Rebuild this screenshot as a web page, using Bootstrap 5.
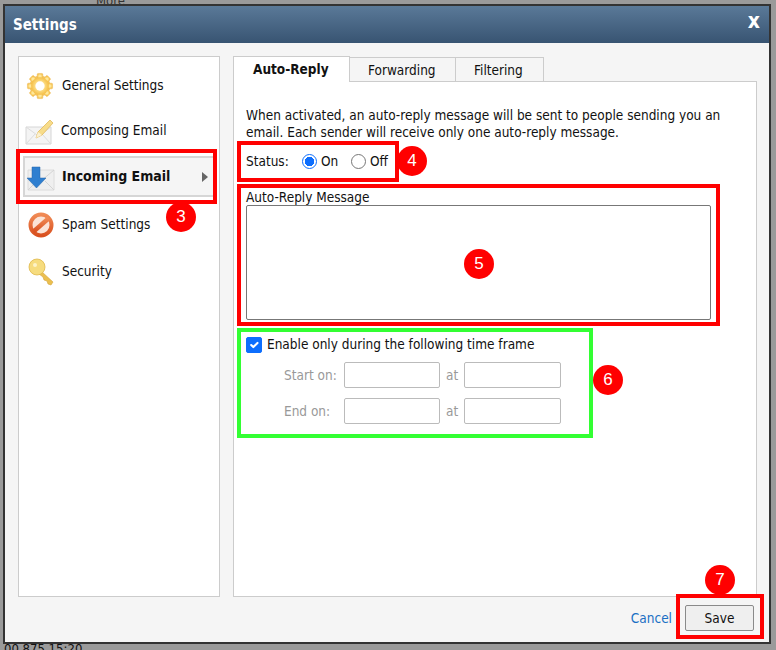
<!DOCTYPE html>
<html lang="en">
<head>
<meta charset="utf-8">
<title>Settings</title>
<link href="https://cdn.jsdelivr.net/npm/bootstrap@5.3.0/dist/css/bootstrap.min.css" rel="stylesheet">
<style>
html,body{height:650px;overflow:hidden}
body{background:#9a9a9a;font-family:"DejaVu Sans Condensed","DejaVu Sans",sans-serif;font-size:13.5px;color:#111;position:relative;padding:4px 0 0 3px}
.dlg{width:768px;height:640px;border:2px solid #333;background:#f5f5f5;display:flex;flex-direction:column}
.dlg-head{height:37px;flex:none;background:linear-gradient(#5a7998,#385472);color:#fff;font-weight:700;font-size:15px;padding:2px 9px 0 8px}
.dlg-x{font-size:21px;line-height:1;font-weight:700;margin-top:-9px}
.dlg-main{flex:1;min-height:0;padding:13px 12px 0 13px;gap:13px}
.side{width:202px;background:#fff;border:1px solid #ccc;padding:8px 4px 4px}
.side-item{height:41px;padding:0 0 0 1px;gap:6px;background:transparent;color:#111;margin-bottom:6px}
.side-item.first{margin-bottom:4px}
.side-item.second{margin-bottom:5px;gap:5px}
.side-item.act{border:2px solid #d6d6d6;background:#f5f5f5;font-weight:700;font-size:14px;margin-bottom:7px;padding-left:0;gap:5px;width:192px}
.side-ico{width:32px;height:32px;flex:none}
.side-arrow{margin-left:auto;margin-right:5px;width:0;height:0;border-left:6px solid #666;border-top:5px solid transparent;border-bottom:5px solid transparent}
.rcol{flex:1;min-width:0}
.tabs{border-bottom:1px solid #ccc;height:26px;flex:none;flex-wrap:nowrap}
.tabs .nav-link{height:25px;margin-top:1px;padding:0 18px;line-height:25px;color:#111;background:#f5f5f5;border:1px solid #ccc;border-radius:0;margin-left:-1px;font-size:13.5px}
.tabs .nav-link.active{background:#fff;font-weight:700;height:27px;margin-top:0;margin-left:0;border-bottom-color:#fff;color:#111;padding:0 19px;width:117px}
.tabs .tab-two{width:107px}
.tabs .tab-three{width:89px}
.pane{flex:1;min-height:0;background:#fff;border:1px solid #ccc;border-top:0;padding:25px 12px 0 12px;line-height:17px}
.stat{height:30px;margin-top:5px}
.stat .form-check-input{width:15px;height:15px;margin:0 4px 0 0;float:none;border:1px solid #777}
.stat .form-check-input:checked{border:1px solid #0d6efd;background:radial-gradient(circle,#0d6efd 0 4.500px,#fff 5px)}
.st-lab{width:56px}
.st-on{width:30px}
.msg-label{line-height:16px;margin-top:13px}
.msg{height:115px;width:465px;border:1px solid #777;border-radius:2px;resize:none;padding:2px;display:block;background:#fff}
.frame{margin-top:16px;line-height:17px}
.frame .form-check-input{width:16px;height:16px;margin:0 5px 0 0;float:none;border-radius:2px}
.tf-row{display:flex;align-items:center;height:26px;color:#999;margin-top:9px}
.tf-row + .tf-row{margin-top:10px}
.tf-lab{width:98px;padding-left:38px}
.tf-in{width:96px;height:26px;border:1px solid #bbb;border-radius:2px;padding:0;background:#fff}
.tf-in.two{width:97px}
.tf-at{width:24px;padding-left:6px}
.foot{height:45px;flex:none;padding:8px 15px 0 0;gap:13px}
.foot a{color:#1a6fc4;text-decoration:none;margin-top:3px}
.savebtn{width:69px;height:26px;padding:0;font-size:13.5px;background:#efefef;border:1px solid #8a8a8a;border-radius:2px;color:#111}
.boxmark{position:absolute;border:4px solid #f00}
.boxmark.grn{border-color:#33ff33}
.num{position:absolute;width:30px;height:30px;border-radius:50%;background:#f00;color:#fff;font-family:"Liberation Sans",sans-serif;font-size:17px;line-height:30px;text-align:center}
.m1{left:16px;top:149px;width:201px;height:55px}
.m2{left:237px;top:141px;width:162px;height:41px}
.m3{left:237px;top:184px;width:483px;height:142px}
.m4{left:237px;top:328px;width:356px;height:110px}
.m5{left:676px;top:594px;width:88px;height:45px}
.n1{left:166px;top:202px}.n2{left:397px;top:146px}.n3{left:464px;top:249px}.n4{left:593px;top:365px}.n5{left:705px;top:565px}
.bgtxt{position:absolute;color:#333;font-size:13px;line-height:1}
.b1{left:96px;top:-6px}.b2{left:4px;top:642px;color:#111}
</style>
</head>
<body>
<span class="bgtxt b1">More</span>
<span class="bgtxt b2">00.875 15:20</span>
<div class="dlg position-relative">
  <div class="dlg-head d-flex align-items-center justify-content-between">
    <span>Settings</span><span class="dlg-x">x</span>
  </div>
  <div class="dlg-main d-flex">
    <div class="side">
      <div class="side-item first d-flex align-items-center">
        <svg class="side-ico" viewBox="0 0 32 32"><defs><radialGradient id="g1"><stop offset=".35" stop-color="#ffe89a"/><stop offset="1" stop-color="#f5bf48"/></radialGradient><linearGradient id="g2" x1="0" y1="0" x2="0" y2="1"><stop offset="0" stop-color="#f08a55"/><stop offset="1" stop-color="#d9501f"/></linearGradient></defs><g transform="translate(16 16) scale(.93) translate(-16 -16)" fill="url(#g1)" stroke="#efc064" stroke-width=".6"><circle cx="16" cy="16" r="11"/><g><rect x="13" y="2.5" width="6" height="6" rx="1"/><rect x="13" y="23.500" width="6" height="6" rx="1"/><rect x="2.500" y="13" width="6" height="6" rx="1"/><rect x="23.500" y="13" width="6" height="6" rx="1"/><rect x="13" y="2.500" width="6" height="6" rx="1" transform="rotate(45 16 16)"/><rect x="13" y="23.500" width="6" height="6" rx="1" transform="rotate(45 16 16)"/><rect x="2.500" y="13" width="6" height="6" rx="1" transform="rotate(45 16 16)"/><rect x="23.500" y="13" width="6" height="6" rx="1" transform="rotate(45 16 16)"/></g><circle cx="16" cy="16" r="9.500" stroke="none"/><circle cx="16" cy="16" r="5" fill="#fff" stroke="none"/></g></svg>
        <span>General Settings</span>
      </div>
      <div class="side-item second d-flex align-items-center">
        <svg class="side-ico" viewBox="0 0 32 32"><path d="M2 12h25v17H2z" fill="#f4f4f4" stroke="#d6d6d6"/><path d="M2 12l12.500 9L27 12M2 29l9-10M27 29l-9-10" fill="none" stroke="#dcdcdc"/><path d="M12 23l2-6L26 5l3 3-11 12z" fill="#f7dc8a" stroke="#e2b95c" stroke-width=".8"/><path d="M12 23l2-6 4 3z" fill="#fbf0cf"/></svg>
        <span>Composing Email</span>
      </div>
      <div class="side-item act d-flex align-items-center">
        <svg class="side-ico" viewBox="0 0 32 32"><path d="M3 9h26v20H3z" fill="#efefef" stroke="#dcdcdc"/><path d="M29 9L16 20M3 29l9-9M29 29l-9-9" fill="none" stroke="#d4d4d4"/><path d="M7 6h8v11h6l-9.500 10L2 17h5z" fill="#2f7fd0" stroke="#2566a8" stroke-width=".5"/></svg>
        <span>Incoming Email</span><span class="side-arrow"></span>
      </div>
      <div class="side-item d-flex align-items-center">
        <svg class="side-ico" viewBox="0 0 32 32"><circle cx="17" cy="16" r="10.500" fill="#fbe3d6" stroke="url(#g2)" stroke-width="4"/><path d="M9 23L25 9" stroke="url(#g2)" stroke-width="4.500"/></svg>
        <span>Spam Settings</span>
      </div>
      <div class="side-item d-flex align-items-center">
        <svg class="side-ico" viewBox="0 0 32 32"><path d="M17 15l12 11-2 3-3-1-1-3-3-1-1-3-4-3z" fill="#ebbf4f" stroke="#d5a53a" stroke-width=".6"/><circle cx="13" cy="11" r="8" fill="#f6dc7e" stroke="#e0b748" stroke-width=".8"/><circle cx="11" cy="9" r="2" fill="#fdf3c8"/></svg>
        <span>Security</span>
      </div>
    </div>
    <div class="rcol d-flex flex-column">
      <ul class="nav tabs">
        <li class="nav-item"><a class="nav-link active" href="#">Auto-Reply</a></li>
        <li class="nav-item"><a class="nav-link tab-two" href="#">Forwarding</a></li>
        <li class="nav-item"><a class="nav-link tab-three" href="#">Filtering</a></li>
      </ul>
      <div class="pane">
        <div>When activated, an auto-reply message will be sent to people sending you an email. Each sender will receive only one auto-reply message.</div>
        <div class="stat d-flex align-items-center">
          <span class="st-lab">Status:</span>
          <input class="form-check-input" type="radio" name="st" checked><span class="st-on">On</span>
          <input class="form-check-input" type="radio" name="st"><span>Off</span>
        </div>
        <div class="msg-label">Auto-Reply Message</div>
        <textarea class="msg form-control"></textarea>
        <div class="frame">
          <div class="d-flex align-items-center"><input class="form-check-input" type="checkbox" checked><span>Enable only during the following time frame</span></div>
          <div class="tf-row"><span class="tf-lab">Start on:</span><input class="tf-in" type="text"><span class="tf-at">at</span><input class="tf-in two" type="text"></div>
          <div class="tf-row"><span class="tf-lab">End on:</span><input class="tf-in" type="text"><span class="tf-at">at</span><input class="tf-in two" type="text"></div>
        </div>
      </div>
    </div>
  </div>
  <div class="foot d-flex justify-content-end align-items-start">
    <a href="#">Cancel</a>
    <button class="btn savebtn" type="button">Save</button>
  </div>
</div>
<div class="boxmark m1"></div><div class="boxmark m2"></div><div class="boxmark m3"></div><div class="boxmark grn m4"></div><div class="boxmark m5"></div>
<div class="num n1">3</div><div class="num n2">4</div><div class="num n3">5</div><div class="num n4">6</div><div class="num n5">7</div>
<script src="https://cdn.jsdelivr.net/npm/bootstrap@5.3.0/dist/js/bootstrap.bundle.min.js"></script>
</body>
</html>
